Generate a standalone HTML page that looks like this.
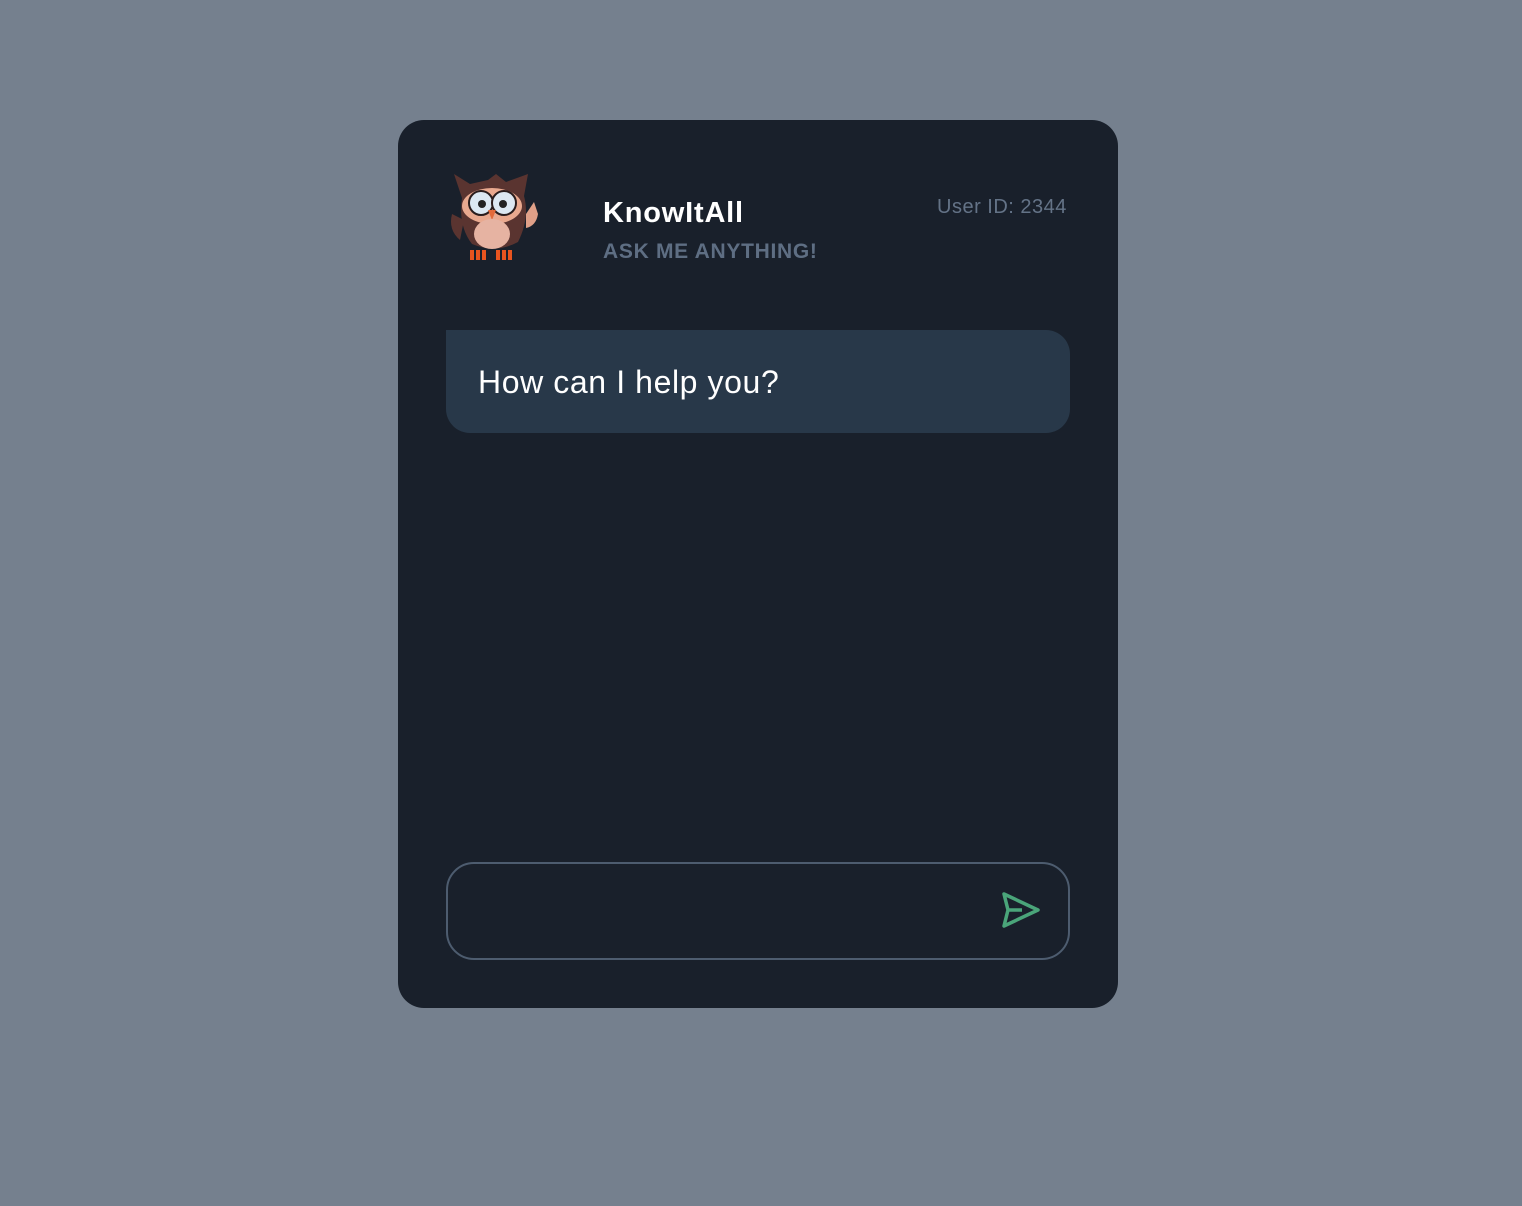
<!DOCTYPE html>
<html><head><style>
body{margin:0;background:#75808e;width:1522px;height:1206px;position:relative;font-family:"Liberation Sans",sans-serif;}
.card{position:absolute;left:398px;top:120px;width:720px;height:888px;background:#19202b;border-radius:26px;}
.t1{position:absolute;left:603px;top:197px;color:#fff;font-weight:bold;font-size:29px;letter-spacing:0.8px}
.t2{position:absolute;left:603px;top:240px;color:#5e6e83;font-weight:bold;font-size:21px;letter-spacing:0.7px}
.uid{position:absolute;left:937px;top:196px;color:#647387;font-size:20px;letter-spacing:0.5px}
.bub{position:absolute;left:446px;top:330px;width:624px;height:103px;background:#283849;border-radius:0 24px 24px 24px;}
.bub span{position:absolute;left:32px;top:34px;color:#fff;font-size:32px;letter-spacing:0.6px}
.inp{position:absolute;left:446px;top:862px;width:620px;height:94px;border:2px solid #4d5c6f;border-radius:28px;}
</style></head><body>
<div class="card"></div>
<svg style="position:absolute;left:448px;top:170px" width="94" height="94" viewBox="0 0 94 94">
<path d="M6 4 L22 14 L40 10 L48 4 L58 12 L80 4 L76 26 Q82 48 70 72 Q48 84 24 74 Q10 56 14 28 Z" fill="#5a3430"/>
<path d="M4 44 Q0 60 12 70 L16 50Z" fill="#5a3430"/>
<path d="M78 44 L86 32 L90 44 Q88 56 78 58Z" fill="#e0a088"/>
<ellipse cx="44" cy="36" rx="30" ry="18" fill="#e9a98f"/>
<circle cx="33" cy="33" r="12" fill="#dce8f2" stroke="#2a1d1d" stroke-width="2"/>
<circle cx="56" cy="33" r="12" fill="#dce8f2" stroke="#2a1d1d" stroke-width="2"/>
<circle cx="34" cy="34" r="4" fill="#222"/><circle cx="55" cy="34" r="4" fill="#222"/>
<path d="M40 40 L48 40 L44 50Z" fill="#e36a3a"/>
<ellipse cx="44" cy="64" rx="18" ry="15" fill="#e6b3a2"/>
<path d="M24 80 v10 M30 80 v10 M36 80 v10 M50 80 v10 M56 80 v10 M62 80 v10" stroke="#e8541f" stroke-width="4"/>
</svg>
<div class="t1">KnowItAll</div>
<div class="t2">ASK ME ANYTHING!</div>
<div class="uid">User ID: 2344</div>
<div class="bub"><span>How can I help you?</span></div>
<div class="inp"></div>
<svg style="position:absolute;left:0;top:0" width="1522" height="1206">
<path d="M1004 894 L1038 910 L1004 926 L1008 910 Z M1008 910 H1022" fill="none" stroke="#4aa57a" stroke-width="3.5" stroke-linejoin="round"/>
</svg>
</body></html>
